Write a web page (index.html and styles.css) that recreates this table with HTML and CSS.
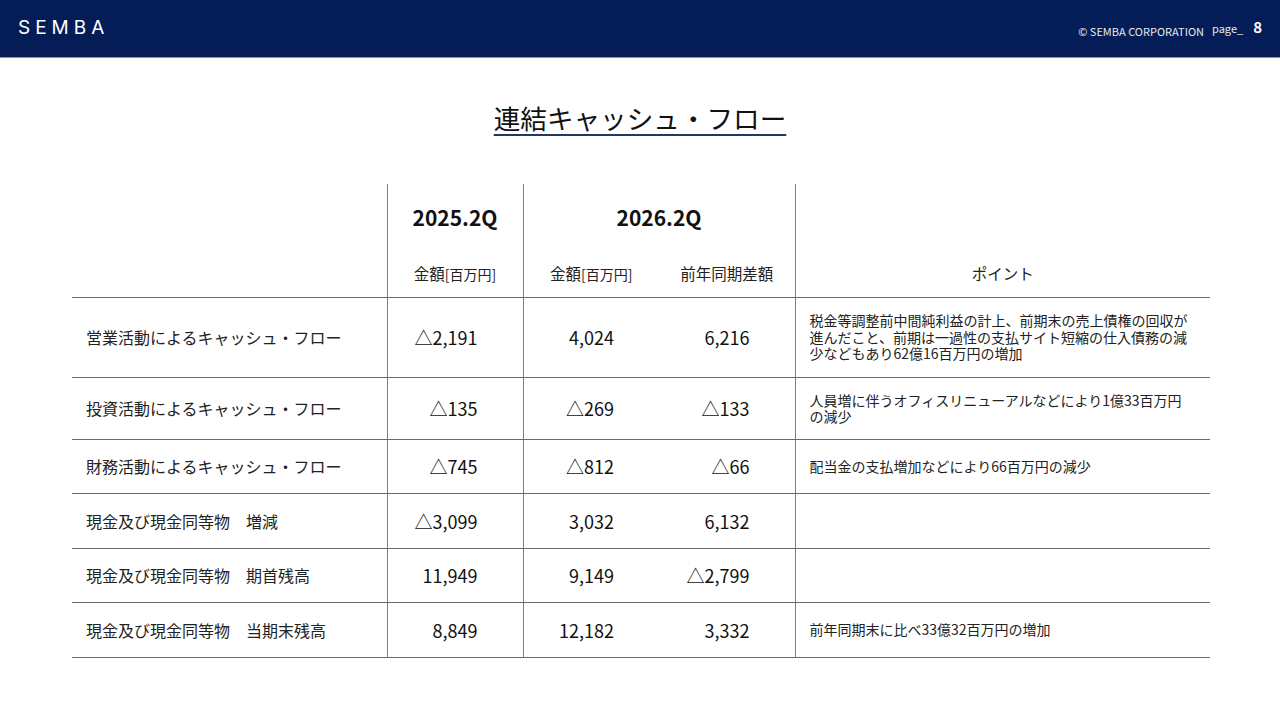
FILE: index.html
```html
<!DOCTYPE html>
<html lang="ja">
<head>
<meta charset="utf-8">
<title>連結キャッシュ・フロー</title>
<link rel="stylesheet" href="styles.css">
</head>
<body>
<header class="topbar">
  <div class="logo">SEMBA</div>
  <div class="meta">
    <span class="copy">© SEMBA CORPORATION</span>
    <span class="page">page_</span>
    <span class="num">8</span>
  </div>
</header>
<main class="content">
  <h1 class="title"><span>連結キャッシュ・フロー</span></h1>
  <table class="cf">
    <colgroup>
      <col class="c-label"><col class="c-num"><col class="c-num"><col class="c-num"><col class="c-point">
    </colgroup>
    <thead>
      <tr class="h1">
        <th class="blank"></th>
        <th class="year vl">2025.2Q</th>
        <th class="year vl" colspan="2">2026.2Q</th>
        <th class="blank vl"></th>
      </tr>
      <tr class="h2">
        <th class="blank"></th>
        <th class="sub vl">金額<small>[百万円]</small></th>
        <th class="sub vl">金額<small>[百万円]</small></th>
        <th class="sub">前年同期差額</th>
        <th class="sub vl">ポイント</th>
      </tr>
    </thead>
    <tbody>
      <tr class="r1">
        <td class="label">営業活動によるキャッシュ・フロー</td>
        <td class="n vl">△2,191</td>
        <td class="n vl">4,024</td>
        <td class="n">6,216</td>
        <td class="pt vl">税金等調整前中間純利益の計上、前期末の売上債権の回収が<br>進んだこと、前期は一過性の支払サイト短縮の仕入債務の減<br>少などもあり62億16百万円の増加</td>
      </tr>
      <tr class="r2">
        <td class="label">投資活動によるキャッシュ・フロー</td>
        <td class="n vl">△135</td>
        <td class="n vl">△269</td>
        <td class="n">△133</td>
        <td class="pt vl">人員増に伴うオフィスリニューアルなどにより1億33百万円<br>の減少</td>
      </tr>
      <tr class="r3">
        <td class="label">財務活動によるキャッシュ・フロー</td>
        <td class="n vl">△745</td>
        <td class="n vl">△812</td>
        <td class="n">△66</td>
        <td class="pt vl">配当金の支払増加などにより66百万円の減少</td>
      </tr>
      <tr class="r4">
        <td class="label">現金及び現金同等物　増減</td>
        <td class="n vl">△3,099</td>
        <td class="n vl">3,032</td>
        <td class="n">6,132</td>
        <td class="pt vl"></td>
      </tr>
      <tr class="r5">
        <td class="label">現金及び現金同等物　期首残高</td>
        <td class="n vl">11,949</td>
        <td class="n vl">9,149</td>
        <td class="n">△2,799</td>
        <td class="pt vl"></td>
      </tr>
      <tr class="r6">
        <td class="label">現金及び現金同等物　当期末残高</td>
        <td class="n vl">8,849</td>
        <td class="n vl">12,182</td>
        <td class="n">3,332</td>
        <td class="pt vl">前年同期末に比べ33億32百万円の増加</td>
      </tr>
    </tbody>
  </table>
</main>
</body>
</html>
```

FILE: styles.css
```css
* { box-sizing: border-box; }
html, body { margin: 0; padding: 0; }
body {
  width: 1280px;
  height: 720px;
  overflow: hidden;
  background: #ffffff;
  font-family: "Noto Sans CJK JP", "Noto Sans", sans-serif;
  color: #111;
}
.topbar {
  height: 58px;
  background: #041d57;
  border-bottom: 1px solid #8a93ad;
  display: flex;
  align-items: center;
  justify-content: space-between;
  padding: 0 18px 0 18px;
}
.logo {
  font-family: "Inter", "Liberation Sans", sans-serif;
  font-weight: 400;
  font-size: 19px;
  letter-spacing: 5px;
  color: #ffffff;
  line-height: 1;
  margin-top: -2px;
}
.meta {
  display: flex;
  align-items: baseline;
  color: #e6e9f0;
  margin-top: 2px;
}
.copy {
  font-size: 11px;
  letter-spacing: 0;
}
.page {
  font-size: 11px;
  margin-left: 8px;
  position: relative;
  top: -3px;
}
.num {
  font-size: 15px;
  font-weight: 700;
  color: #fff;
  margin-left: 10px;
  position: relative;
  top: -3px;
}
.content {
  padding-top: 41px;
}
.title {
  margin: 0;
  text-align: center;
  font-size: 26.6px;
  font-weight: 400;
  line-height: 38px;
  color: #111;
}
.title span {
  text-decoration: underline;
  text-decoration-color: #1f3864;
  text-decoration-thickness: 2px;
  text-underline-offset: 5px;
}
.cf {
  margin: 47px 0 0 72px;
  width: 1138px;
  border-collapse: collapse;
  table-layout: fixed;
}
.c-label { width: 315px; }
.c-num { width: 136px; }
.c-point { width: 415px; }
.cf th, .cf td {
  padding: 0;
  vertical-align: middle;
}
.vl { border-left: 1px solid #808080; }
.h1 th { height: 65px; }
.h2 th { height: 48px; border-bottom: 1px solid #6a6a6a; }
.year {
  font-size: 21px;
  font-weight: 700;
  text-align: center;
  color: #111;
}
.sub {
  font-size: 15.5px;
  font-weight: 400;
  text-align: center;
  color: #222;
}
.sub small {
  font-size: 14px;
}
.cf tbody td { border-bottom: 1px solid #6a6a6a; }
.r1 td { height: 80px; }
.r2 td { height: 62px; }
.r3 td { height: 54px; }
.r4 td { height: 55px; }
.r5 td { height: 54px; }
.r6 td { height: 55px; }
.label {
  font-size: 16px;
  padding-left: 14px !important;
  color: #222;
}
.n {
  font-size: 18px;
  text-align: right;
  padding-right: 45px !important;
  color: #111;
}
.pt {
  font-size: 14px;
  line-height: 16.5px;
  padding-left: 14px !important;
  color: #222;
}
```
